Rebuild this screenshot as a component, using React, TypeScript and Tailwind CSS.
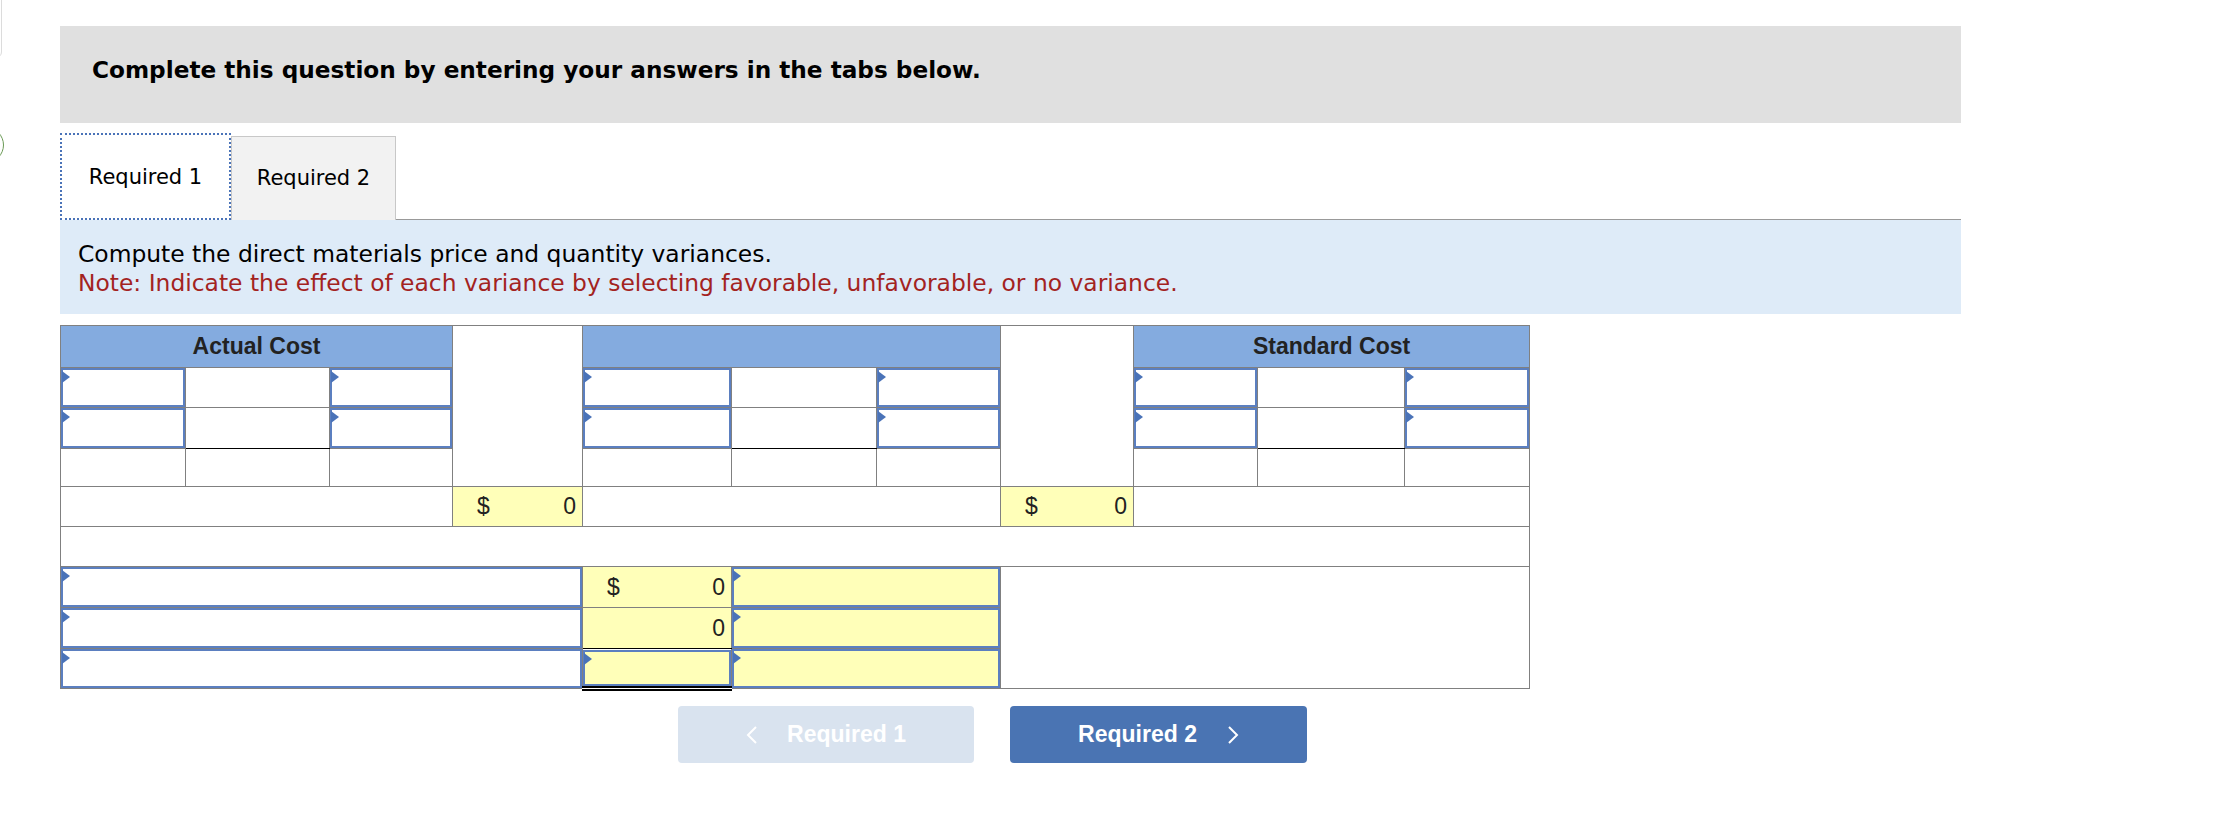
import React from "react"

function Tri() {
  return (
    <span className="absolute left-[-1px] top-[1px] border-y-[6px] border-l-[8px] border-y-transparent border-l-[#4a73b8]" />
  )
}

function Field({ yellow, h = "h-[39px]" }: { yellow?: boolean; h?: string }) {
  return (
    <div className={`relative ${h} border-2 border-[#5b7fc0] ${yellow ? "bg-[#ffffb9]" : "bg-white"}`}>
      <Tri />
    </div>
  )
}

function Amount({ dollar, value }: { dollar?: boolean; value: string }) {
  return (
    <div className="flex items-center justify-between pl-[24px] pr-[6px]">
      <span>{dollar ? "$" : ""}</span>
      <span>{value}</span>
    </div>
  )
}

function Chevron({ dir }: { dir: "left" | "right" }) {
  return (
    <svg width="12" height="20" viewBox="0 0 12 20" fill="none" stroke="currentColor" strokeWidth="2">
      {dir === "left" ? <path d="M10 2 L2 10 L10 18" /> : <path d="M2 2 L10 10 L2 18" />}
    </svg>
  )
}

const cell = "border border-[#808080] p-0"
const yellowCell = "border border-[#808080] p-0 bg-[#ffffb9]"
const head = "border border-[#808080] bg-[#84abdf] p-0 text-center font-bold text-[#222]"

export default function App() {
  return (
    <div className="relative min-h-[814px] w-[2230px] overflow-hidden bg-white">
      {/* bits of the surrounding page at the left edge */}
      <div className="absolute left-[-20px] top-[-10px] h-[68px] w-[22px] rounded-br-[6px] border border-[#dcdcdc]" />
      <div className="absolute left-[-32px] top-[127px] h-[36px] w-[36px] rounded-full border-[1.5px] border-[#6a9a55]" />

      <div className="w-[1961px] pl-[60px] pt-[26px]">
        <div className="h-[97px] bg-[#e0e0e0] pl-[32px] pt-[27px] font-['DejaVu_Sans',sans-serif] text-[23.2px] font-bold text-black">
          Complete this question by entering your answers in the tabs below.
        </div>

        <div className="mt-[10px] flex h-[87px] font-['DejaVu_Sans',sans-serif] text-[21px] text-black">
          <div className="flex w-[171px] items-center justify-center border-2 border-dotted border-[#4a73b8] bg-white pt-[2px]">
            Required 1
          </div>
          <div className="mt-[3px] flex w-[165px] items-center justify-center border border-b-0 border-[#c8c8c8] bg-[#f2f2f2]">
            Required 2
          </div>
          <div className="flex-1 border-b border-[#999]" />
        </div>

        <div className="bg-[#deebf8] pb-[16px] pl-[18px] pt-[20px] font-['DejaVu_Sans',sans-serif] text-[23.4px] leading-[29px]">
          <p className="text-black">Compute the direct materials price and quantity variances.</p>
          <p className="text-[#a3231f]">Note: Indicate the effect of each variance by selecting favorable, unfavorable, or no variance.</p>
        </div>

        <table className="mt-[11px] w-[1469px] table-fixed border-collapse font-['Liberation_Sans',Arial,sans-serif] text-[23px] text-[#222]">
          <colgroup>
            <col className="w-[125px]" />
            <col className="w-[144px]" />
            <col className="w-[123px]" />
            <col className="w-[130px]" />
            <col className="w-[149px]" />
            <col className="w-[145px]" />
            <col className="w-[124px]" />
            <col className="w-[133px]" />
            <col className="w-[124px]" />
            <col className="w-[147px]" />
            <col className="w-[125px]" />
          </colgroup>
          <tbody>
            <tr className="h-[42px]">
              <th colSpan={3} className={head}>Actual Cost</th>
              <td rowSpan={4} className={cell} />
              <th colSpan={3} className={head} />
              <td rowSpan={4} className={cell} />
              <th colSpan={3} className={head}>Standard Cost</th>
            </tr>
            <tr className="h-[40px]">
              <td className={cell}><Field /></td>
              <td className={cell} />
              <td className={cell}><Field /></td>
              <td className={cell}><Field /></td>
              <td className={cell} />
              <td className={cell}><Field /></td>
              <td className={cell}><Field /></td>
              <td className={cell} />
              <td className={cell}><Field /></td>
            </tr>
            <tr className="h-[41px]">
              <td className={cell}><Field h="h-[40px]" /></td>
              <td className={`${cell} border-b-black`} />
              <td className={cell}><Field h="h-[40px]" /></td>
              <td className={cell}><Field h="h-[40px]" /></td>
              <td className={`${cell} border-b-black`} />
              <td className={cell}><Field h="h-[40px]" /></td>
              <td className={cell}><Field h="h-[40px]" /></td>
              <td className={`${cell} border-b-black`} />
              <td className={cell}><Field h="h-[40px]" /></td>
            </tr>
            <tr className="h-[38px]">
              <td className={cell} />
              <td className={cell} />
              <td className={cell} />
              <td className={cell} />
              <td className={cell} />
              <td className={cell} />
              <td className={cell} />
              <td className={cell} />
              <td className={cell} />
            </tr>
            <tr className="h-[40px]">
              <td colSpan={3} className={cell} />
              <td className={yellowCell}><Amount dollar value="0" /></td>
              <td colSpan={3} className={cell} />
              <td className={yellowCell}><Amount dollar value="0" /></td>
              <td colSpan={3} className={cell} />
            </tr>
            <tr className="h-[40px]">
              <td colSpan={11} className={cell} />
            </tr>
            <tr className="h-[41px]">
              <td colSpan={4} className={cell}><Field h="h-[40px]" /></td>
              <td className={yellowCell}><Amount dollar value="0" /></td>
              <td colSpan={2} className={cell}><Field yellow h="h-[40px]" /></td>
              <td colSpan={4} rowSpan={3} className={cell} />
            </tr>
            <tr className="h-[41px]">
              <td colSpan={4} className={cell}><Field h="h-[40px]" /></td>
              <td className={`${yellowCell} border-b-black`}><Amount value="0" /></td>
              <td colSpan={2} className={cell}><Field yellow h="h-[40px]" /></td>
            </tr>
            <tr className="h-[40px]">
              <td colSpan={4} className={cell}><Field h="h-[39px]" /></td>
              <td className={`${cell} border-b-[5px] border-b-black [border-bottom-style:double]`}><Field yellow h="h-[36px]" /></td>
              <td colSpan={2} className={cell}><Field yellow h="h-[39px]" /></td>
            </tr>
          </tbody>
        </table>

        <div className="flex gap-[36px] pl-[618px] pt-[15px] font-['Liberation_Sans',Arial,sans-serif] text-[23px] font-bold text-white">
          <button className="flex h-[57px] w-[296px] items-center justify-center gap-[29px] rounded-[4px] bg-[#d9e3ef]">
            <Chevron dir="left" />
            <span>Required 1</span>
          </button>
          <button className="flex h-[57px] w-[297px] items-center justify-center gap-[30px] rounded-[4px] bg-[#4a74b3]">
            <span>Required 2</span>
            <Chevron dir="right" />
          </button>
        </div>
      </div>
    </div>
  )
}
